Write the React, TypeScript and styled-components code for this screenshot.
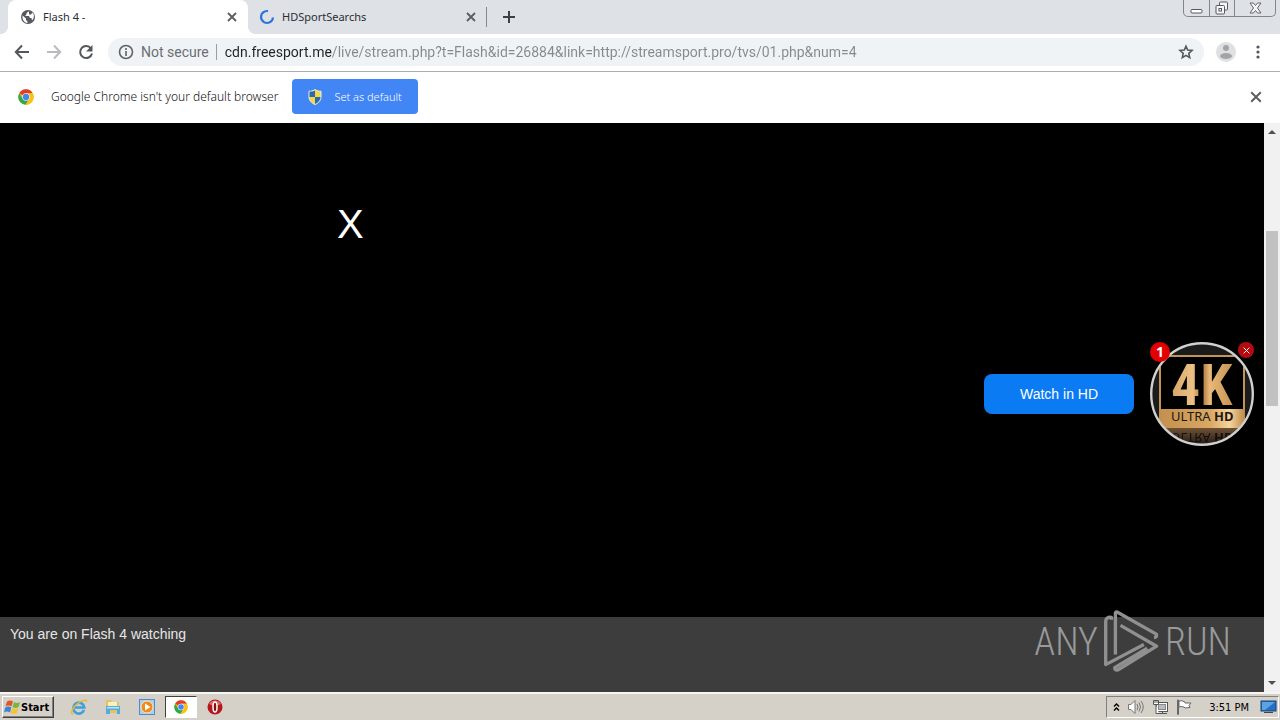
import React from "react";
import styled, { createGlobalStyle } from "styled-components";

const ui = '"Noto Sans", "Open Sans", sans-serif';
const address = 'Roboto, "Noto Sans", sans-serif';
const arial = '"Liberation Sans", Arial, sans-serif';

const GlobalStyle = createGlobalStyle`
  *, *::before, *::after { box-sizing: border-box; }
  body { margin: 0; background: #000; font-family: ${ui}; }
  button { font: inherit; border: 0; padding: 0; background: none; color: inherit; cursor: pointer; }
  svg { display: block; flex: none; }
`;

const Screen = styled.div`
  display: flex;
  flex-direction: column;
  min-height: 100vh;
`;

/* Browser frame */
const TabStrip = styled.div`
  display: flex;
  height: 34px;
  padding-left: 8px;
  background: #dee1e6;
`;

const Tab = styled.div<{ $active?: boolean }>`
  display: flex;
  align-items: center;
  position: relative;
  width: ${(p) => (p.$active ? 240 : 238)}px;
  padding: 0 ${(p) => (p.$active ? "10px 0 12px" : "9px 0 11px")};
  border-radius: 8px 8px 0 0;
  background: ${(p) => (p.$active ? "#fff" : "transparent")};
  ${(p) =>
    p.$active &&
    `
    &::before, &::after {
      content: "";
      position: absolute;
      bottom: 0;
      width: 8px;
      height: 8px;
    }
    &::before { left: -8px; background: radial-gradient(circle at 0 0, transparent 8px, #fff 8px); }
    &::after { right: -8px; background: radial-gradient(circle at 100% 0, transparent 8px, #fff 8px); }
  `}
`;

const TabTitle = styled.button`
  display: flex;
  flex: 1;
  align-items: center;
  gap: 7px;
  font-size: 11px;
  line-height: 16px;
  color: #2b2e33;
`;

const IconButton = styled.button<{ $size?: number }>`
  display: flex;
  flex: none;
  align-items: center;
  justify-content: center;
  width: ${(p) => p.$size ?? 16}px;
  height: ${(p) => p.$size ?? 16}px;
`;

const TabDivider = styled.span`
  align-self: center;
  width: 1px;
  height: 20px;
  margin-right: 14px;
  background: #85888d;
`;

const NewTab = styled(IconButton)`
  align-self: center;
`;

const WindowControls = styled.div`
  display: flex;
  height: 17px;
  margin: 0 4px 0 auto;
  border: 1px solid #81858c;
  border-top: 0;
  border-radius: 0 0 5px 5px;
`;

const WindowButton = styled.button<{ $wide?: boolean }>`
  display: flex;
  align-items: center;
  justify-content: center;
  width: ${(p) => (p.$wide ? 41 : 25)}px;
  & + & { border-left: 1px solid #81858c; }
`;

const Toolbar = styled.div`
  display: flex;
  align-items: center;
  height: 38px;
  padding: 0 12px 2px;
  border-bottom: 1px solid #adadad;
  background: #fff;
`;

const NavButtons = styled.div`
  display: flex;
  gap: 12px;
  margin-right: 12px;
`;

const AddressBar = styled.div`
  display: flex;
  flex: 1;
  align-items: center;
  height: 28px;
  margin-right: 12px;
  padding: 0 10px;
  border-radius: 14px;
  background: #f0f3f6;
`;

const Security = styled.label`
  padding: 0 7px;
  font: 14px/20px ${address};
  color: #6a6e73;
`;

const AddressDivider = styled.span`
  width: 1px;
  height: 16px;
  margin-right: 8px;
  background: #9a9da1;
`;

const AddressInput = styled.input`
  flex: 1;
  min-width: 0;
  height: 24px;
  padding: 0;
  border: 0;
  outline: 0;
  font: 14px/20px ${address};
  color: transparent;
  background: linear-gradient(90deg, #1f2226 0 107px, #85898d 107px);
  background-clip: text;
  -webkit-background-clip: text;
`;

const RightTools = styled.div`
  display: flex;
  align-items: center;
  gap: 12px;
`;

const InfoBar = styled.div`
  display: flex;
  align-items: center;
  height: 51px;
  padding: 0 16px 2px 18px;
  background: #fff;
`;

const InfoText = styled.p`
  margin: 0 14px 0 17px;
  font-size: 12px;
  font-weight: 300;
  line-height: 18px;
  color: #101214;
`;

const DefaultButton = styled.button`
  display: flex;
  align-items: center;
  gap: 12px;
  height: 35px;
  margin-right: auto;
  padding: 0 16px;
  border-radius: 4px;
  background: #4285f4;
  font-size: 11px;
  font-weight: 300;
  color: #fff;
`;

/* Page */
const PageArea = styled.div`
  display: flex;
  flex: 1;
  min-height: 520px;
`;

const Page = styled.main`
  display: flex;
  flex: 1;
  flex-direction: column;
  position: relative;
  background: #000;
  font-family: ${arial};
`;

const Player = styled.section`
  flex: 1;
  padding: 78px 0 0 337px;
`;

const CloseOverlay = styled.button`
  font-size: 40px;
  line-height: 46px;
  color: #fff;
`;

const PageFooter = styled.footer`
  height: 75px;
  padding: 8px 10px;
  background: #3d3d3d;
  font-size: 14px;
  line-height: 18px;
  color: #e6e6e6;
`;

const Promo = styled.div`
  display: flex;
  position: absolute;
  top: 219px;
  right: 10px;
  align-items: center;
  gap: 16px;
`;

const WatchButton = styled.button`
  width: 150px;
  height: 40px;
  border-radius: 8px;
  background: #0b7bf4;
  font-size: 14px;
  color: #fff;
`;

const Avatar = styled.div`
  position: relative;
`;

const Count = styled.span`
  display: flex;
  position: absolute;
  top: 0;
  left: 0;
  align-items: center;
  justify-content: center;
  width: 20px;
  height: 20px;
  border-radius: 50%;
  background: #e40000;
  font: bold 14px/20px "Noto Sans", sans-serif;
  color: #fff;
`;

const Dismiss = styled(IconButton)`
  position: absolute;
  top: 0;
  right: 0;
  border-radius: 50%;
  background: #b50a10;
`;

const Watermark = styled.div`
  display: flex;
  position: absolute;
  right: 33px;
  bottom: 19px;
  align-items: center;
  gap: 5px;
  font: 300 38px/62px "Roboto Condensed", Roboto, sans-serif;
  color: #999;
`;

const Scrollbar = styled.div`
  display: flex;
  flex-direction: column;
  align-items: center;
  width: 16px;
  background: #f1f1f1;
`;

const ScrollSpace = styled.span<{ $grow: number }>`
  flex: ${(p) => p.$grow} 1 0;
`;

const ScrollThumb = styled(ScrollSpace)`
  width: 12px;
  background: #c1c1c1;
`;

/* Taskbar */
const Taskbar = styled.footer`
  display: flex;
  align-items: center;
  height: 28px;
  padding: 0 1px 0 2px;
  border-top: 2px solid #f7f5f1;
  background: #d5d0c8;
  font-family: "DejaVu Sans Condensed", "DejaVu Sans", sans-serif;
`;

const StartButton = styled.button`
  display: flex;
  align-items: center;
  width: 52px;
  height: 22px;
  margin-right: 14px;
  padding-left: 1px;
  border: 1px solid;
  border-color: #fff #404040 #404040 #fff;
  box-shadow: inset -1px -1px #808080;
  font-size: 11px;
  font-weight: bold;
  color: #000;
`;

const QuickLaunch = styled.div`
  display: flex;
`;

const TaskButton = styled.button<{ $pressed?: boolean }>`
  display: flex;
  align-items: center;
  justify-content: center;
  width: ${(p) => (p.$pressed ? 32 : 22)}px;
  height: 22px;
  margin-right: ${(p) => (p.$pressed ? 7 : 12)}px;
  border: ${(p) => (p.$pressed ? "1px solid" : "0")};
  border-color: #404040 #fff #fff #404040;
  background: ${(p) => (p.$pressed ? "#fff" : "none")};
  &:nth-child(3) { margin-right: 7px; }
`;

const Tray = styled.div`
  display: flex;
  align-items: center;
  height: 22px;
  margin-left: auto;
  padding: 0 1px 0 5px;
  border: 1px solid;
  border-color: #808080 #fff #fff #808080;
`;

const TrayIcons = styled.div`
  display: flex;
  align-items: center;
  gap: 7px;
`;

const Clock = styled.time`
  margin: 0 11px 0 16px;
  font-size: 11px;
  color: #000;
`;

const Cross = ({ size = 10, color = "#5a5d61", width = 1.8 }) => (
  <svg width={size} height={size} viewBox="0 0 10 10" fill="none" stroke={color} strokeWidth={width}>
    <path d="M1 1l8 8M9 1l-8 8" />
  </svg>
);

const ChromeLogo = ({ size = 16 }) => (
  <svg width={size} height={size} viewBox="0 0 48 48">
    <circle cx="24" cy="24" r="23" fill="#fbc116" />
    <path d="M24 24L4 12.500A23 23 0 0 1 44 12.500H24z" fill="#e33b2e" />
    <path d="M4 12.500A23 23 0 0 0 23 47L33.500 29.500L24 24L14 29.500z" fill="#2da94f" />
    <path d="M24 13h20.200A23 23 0 0 1 23 47l10.500-17.500z" fill="#fbc116" />
    <circle cx="24" cy="24" r="11" fill="#fff" />
    <circle cx="24" cy="24" r="9.500" fill="#4285f4" />
  </svg>
);

const Globe = () => (
  <svg width="16" height="16" viewBox="0 0 16 16">
    <circle cx="8" cy="8" r="7" fill="#55585c" />
    <path d="M2.500 6.500L6 9.500v1.500l1.500 1.500v1.500C4 13.500 2 10.500 2.500 6.500zM9 2.300L6.500 4v1.500L5 7h4l1 2h1.500l.5 2.500c2.500-2.500 2.500-6 .5-8L11 5.500H9z" fill="#fff" />
  </svg>
);

const Spinner = () => (
  <svg width="16" height="16" viewBox="0 0 16 16" fill="none" stroke="#2e75db" strokeWidth="2.200">
    <path d="M4.800 2.900A6 6 0 1 0 14 8.500" />
    <path d="M4 3.600A6 6 0 0 1 9 2.100" />
  </svg>
);

const Shield = () => (
  <svg width="14" height="16" viewBox="0 0 14 16">
    <path d="M7 .5C5 2 3 2.300 1 2.200V8c0 3.500 2.500 6 6 7.500C10.500 14 13 11.500 13 8V2.200C11 2.300 9 2 7 .5z" fill="#f4d83d" stroke="#e8edf1" />
    <path d="M7 1.500V8H1.500V2.700C3.500 2.700 5.500 2.300 7 1.500zM7 8h5.500c0 3.200-2.200 5.400-5.500 7z" fill="#2a68b8" />
  </svg>
);

const Badge4K = () => (
  <svg width="104" height="104" viewBox="0 0 104 104" role="img" aria-label="4K Ultra HD">
    <defs>
      <linearGradient id="gold" x1="0" y1="0" x2="1" y2="0">
        <stop offset="0" stopColor="#d5a566" />
        <stop offset=".35" stopColor="#edc184" />
        <stop offset=".5" stopColor="#a5753d" />
        <stop offset=".62" stopColor="#e8b978" />
        <stop offset="1" stopColor="#c59152" />
      </linearGradient>
      <linearGradient id="band" x1="0" y1="0" x2="1" y2="0">
        <stop offset="0" stopColor="#c38f4e" />
        <stop offset=".6" stopColor="#d9a965" />
        <stop offset=".82" stopColor="#f5d49b" />
        <stop offset="1" stopColor="#bd884a" />
      </linearGradient>
      <linearGradient id="floor" x1="0" y1="0" x2="0" y2="1">
        <stop offset="0" stopColor="#705235" />
        <stop offset="1" stopColor="#1d1713" />
      </linearGradient>
      <clipPath id="disc"><circle cx="52" cy="52" r="50" /></clipPath>
    </defs>
    <g clipPath="url(#disc)">
      <rect width="104" height="104" fill="#1b1b1b" />
      <rect x="10" y="14" width="84" height="74" fill="#000" stroke="#c2935b" strokeWidth="2" />
      <text x="21" y="63" fontFamily="Roboto Condensed, Roboto, sans-serif" fontWeight="bold" fontSize="58" fill="url(#gold)">4K</text>
      <rect x="9" y="67" width="86" height="19" fill="url(#band)" />
      <text x="21" y="79" fontFamily="Noto Sans, sans-serif" fontSize="13" fill="#21180e">
        ULTRA <tspan fontWeight="bold">HD</tspan>
      </text>
      <rect y="86" width="104" height="18" fill="url(#floor)" />
      <g transform="matrix(1 0 0 -1 0 181)" opacity=".85">
        <text x="21" y="90" fontFamily="Noto Sans, sans-serif" fontSize="13" fill="#0b0908" aria-hidden="true">
          ULTRA <tspan fontWeight="bold">HD</tspan>
        </text>
      </g>
    </g>
    <circle cx="52" cy="52" r="50.800" fill="none" stroke="#d0d0d0" strokeWidth="2.400" />
  </svg>
);

const PlayMark = () => (
  <svg width="57" height="63" viewBox="268 28 170 188" fill="none" stroke="#909090" strokeWidth="10" strokeLinejoin="round">
    <path d="M293 57V50Q276 48 276 62V191L390 131" />
    <path d="M305 161V36Q308 32 314 36L427 100Q430 109 420 110" />
    <path d="M320 74L428 136L312 207Q303 209 303 200L400 142" />
  </svg>
);

export default function App() {
  return (
    <Screen>
      <GlobalStyle />
      <TabStrip>
        <Tab $active>
          <TabTitle><Globe />Flash 4 -</TabTitle>
          <IconButton $size={12} aria-label="Close tab"><Cross /></IconButton>
        </Tab>
        <Tab>
          <TabTitle><Spinner />HDSportSearchs</TabTitle>
          <IconButton $size={12} aria-label="Close tab"><Cross /></IconButton>
        </Tab>
        <TabDivider />
        <NewTab aria-label="New tab">
          <svg width="14" height="14" viewBox="0 0 14 14" stroke="#3c4043" strokeWidth="2"><path d="M7 1v12M1 7h12" /></svg>
        </NewTab>
        <WindowControls>
          <WindowButton aria-label="Minimize">
            <svg width="13" height="14" viewBox="0 0 13 14" fill="#fff" stroke="#555960"><rect x="1" y="8.500" width="11" height="3.500" rx="1" /></svg>
          </WindowButton>
          <WindowButton aria-label="Restore">
            <svg width="14" height="14" viewBox="0 0 14 14" fill="#f4f5f7" stroke="#555960">
              <rect x="4.500" y="1" width="8" height="8" rx="1" />
              <rect x="1" y="4.500" width="8.500" height="8.500" rx="1" />
              <rect x="4" y="7.500" width="2.500" height="2.500" />
            </svg>
          </WindowButton>
          <WindowButton $wide aria-label="Close">
            <svg width="13" height="12" viewBox="0 0 13 12" fill="#f4f5f7" stroke="#62666c">
              <path d="M1 1h3.500l2 2.500L8.500 1H12L8.500 6l3.500 5H8.500L6.500 8.500l-2 2.500H1l3.500-5z" />
            </svg>
          </WindowButton>
        </WindowControls>
      </TabStrip>

      <Toolbar>
        <NavButtons>
          <IconButton $size={20} aria-label="Back">
            <svg width="16" height="16" viewBox="0 0 16 16" fill="none" stroke="#54575b" strokeWidth="2"><path d="M15 8H2M8 1.500L1.800 8 8 14.500" /></svg>
          </IconButton>
          <IconButton $size={20} aria-label="Forward">
            <svg width="16" height="16" viewBox="0 0 16 16" fill="none" stroke="#b9bbbe" strokeWidth="2"><path d="M1 8h13M8 1.500L14.200 8 8 14.500" /></svg>
          </IconButton>
          <IconButton $size={20} aria-label="Reload">
            <svg width="16" height="16" viewBox="0 0 16 16" fill="none" stroke="#54575b" strokeWidth="2">
              <path d="M13 4.500A6 6 0 1 0 14 9.500" />
              <path d="M14.500 1v6.500H8z" fill="#54575b" stroke="none" />
            </svg>
          </IconButton>
        </NavButtons>
        <AddressBar>
          <svg width="16" height="16" viewBox="0 0 16 16" fill="none" stroke="#5f6368" strokeWidth="1.600">
            <circle cx="8" cy="8" r="6.500" /><path d="M8 7v5M8 4v2" />
          </svg>
          <Security htmlFor="address">Not secure</Security>
          <AddressDivider />
          <AddressInput
            id="address"
            spellCheck={false}
            defaultValue="cdn.freesport.me/live/stream.php?t=Flash&id=26884&link=http://streamsport.pro/tvs/01.php&num=4"
          />
          <IconButton aria-label="Bookmark">
            <svg width="16" height="16" viewBox="0 0 16 16" fill="none" stroke="#54575b" strokeWidth="1.600">
              <path d="M8 2.200l1.700 3.900 4.300.4-3.200 2.900.9 4.200L8 11.400l-3.700 2.200.9-4.200L2 6.500l4.300-.4z" />
            </svg>
          </IconButton>
        </AddressBar>
        <RightTools>
          <IconButton $size={20} aria-label="Profile">
            <svg width="20" height="20" viewBox="0 0 20 20">
              <circle cx="10" cy="10" r="10" fill="#dfe0e1" />
              <circle cx="10" cy="6" r="3" fill="#a2a4a6" /><ellipse cx="10" cy="14" rx="6" ry="3" fill="#a2a4a6" />
            </svg>
          </IconButton>
          <IconButton $size={20} aria-label="Menu">
            <svg width="4" height="14" viewBox="0 0 4 14" fill="#54575b"><circle cx="2" cy="2" r="1.600" /><circle cx="2" cy="7" r="1.600" /><circle cx="2" cy="12" r="1.600" /></svg>
          </IconButton>
        </RightTools>
      </Toolbar>

      <InfoBar>
        <ChromeLogo />
        <InfoText>Google Chrome isn't your default browser</InfoText>
        <DefaultButton><Shield />Set as default</DefaultButton>
        <IconButton aria-label="Dismiss"><Cross size={12} width={1.6} /></IconButton>
      </InfoBar>

      <PageArea>
        <Page>
          <Player><CloseOverlay>X</CloseOverlay></Player>
          <PageFooter>You are on Flash 4 watching</PageFooter>
          <Promo>
            <WatchButton>Watch in HD</WatchButton>
            <Avatar>
              <Badge4K />
              <Count>1</Count>
              <Dismiss aria-label="Close offer"><Cross size={7} width={1.4} color="#fff" /></Dismiss>
            </Avatar>
          </Promo>
          <Watermark><span>ANY</span><PlayMark /><span>RUN</span></Watermark>
        </Page>
        <Scrollbar>
          <svg width="16" height="17" viewBox="0 0 16 17" fill="#505050"><path d="M4 11l4-4 4 4z" /></svg>
          <ScrollSpace $grow={91} />
          <ScrollThumb $grow={175} />
          <ScrollSpace $grow={269} />
          <svg width="16" height="17" viewBox="0 0 16 17" fill="#505050"><path d="M4 6l4 4 4-4z" /></svg>
        </Scrollbar>
      </PageArea>

      <Taskbar>
        <StartButton>
          <svg width="17" height="16" viewBox="0 0 17 16">
            <path d="M3 2.500q3-2 6 0L7.500 7.500q-3-2-6 0z" fill="#e2562a" />
            <path d="M10 3q3 2 6 0l-1.500 5q-3 2-6 0z" fill="#7ab53c" />
            <path d="M1.300 8.500q3-2 6 0L6 13.500q-3-2-6 0z" fill="#3c83cf" />
            <path d="M8.300 9q3 2 6 0l-1.500 5q-3 2-6 0z" fill="#f6c22f" />
          </svg>
          Start
        </StartButton>
        <QuickLaunch>
          <TaskButton aria-label="Internet Explorer">
            <svg width="18" height="18" viewBox="0 0 18 18" fill="none">
              <path d="M14 12A5.500 5.500 0 1 1 14.300 9.500H5" stroke="#3da1dd" strokeWidth="2.600" />
              <path d="M3 16C0 16 2 10 7 6s10-5 9.500-2" stroke="#e9b92e" strokeWidth="1.500" />
            </svg>
          </TaskButton>
          <TaskButton aria-label="Explorer">
            <svg width="18" height="18" viewBox="0 0 18 18">
              <path d="M2 2h5l1 2h7v11H2z" fill="#e3c45c" />
              <path d="M4 4h9v5H4z" fill="#f9efc0" />
              <path d="M2 8h14v8h-3v-4H6v4H2z" fill="#55abd9" />
              <path d="M3 9h12v1.500H3z" fill="#c1e3f2" />
            </svg>
          </TaskButton>
          <TaskButton aria-label="Media Player">
            <svg width="16" height="16" viewBox="0 0 16 16">
              <rect x=".5" y=".5" width="15" height="15" fill="#a9d1ee" stroke="#4a8cc5" />
              <circle cx="8" cy="8" r="6" fill="#f28a1c" stroke="#fbe3c4" /><path d="M6 4.500v7L11.500 8z" fill="#fff" />
            </svg>
          </TaskButton>
          <TaskButton $pressed aria-label="Google Chrome"><ChromeLogo size={14} /></TaskButton>
          <TaskButton aria-label="Opera">
            <svg width="16" height="16" viewBox="0 0 16 16">
              <circle cx="8" cy="8" r="7.500" fill="#b3161b" /><path d="M2 5a7 7 0 0 1 12 0q-6 3-12 0z" fill="#df6a67" />
              <ellipse cx="8" cy="8" rx="2" ry="5" fill="#8b0c10" stroke="#fff" strokeWidth="1.500" />
            </svg>
          </TaskButton>
        </QuickLaunch>
        <Tray>
          <TrayIcons>
            <IconButton $size={8} aria-label="Show hidden icons">
              <svg width="7" height="10" viewBox="0 0 7 10" fill="none" stroke="#000" strokeWidth="1.400"><path d="M1 4.500L3.500 2 6 4.500M1 8.500L3.500 6 6 8.500" /></svg>
            </IconButton>
            <IconButton $size={18} aria-label="Volume">
              <svg width="18" height="16" viewBox="0 0 18 16" fill="none" stroke="#77777a">
                <path d="M1.500 5.500H4l4-4v13l-4-4H1.500z" fill="#fff" /><path d="M10 5q2 3 0 6M12 3.500q3 4.500 0 9M14 2q4.500 6 0 12" />
              </svg>
            </IconButton>
            <IconButton $size={17} aria-label="Network">
              <svg width="17" height="16" viewBox="0 0 17 16" fill="#fff" stroke="#55585b">
                <rect x="4.500" y="3.500" width="11" height="9" /><rect x="6.500" y="5.500" width="7" height="5" fill="#bbb" stroke="#888" />
                <path d="M7 14.500h8M10.500 13v1M1.500 1.500h5v4h-5zM3 1v3M5 1v3M4 6v8.500h3" />
              </svg>
            </IconButton>
            <IconButton $size={17} aria-label="Action center">
              <svg width="17" height="16" viewBox="0 0 17 16" fill="#fff" stroke="#66696c">
                <path d="M1.500 1v14.500h1V1z" /><path d="M3 2q3-1 6 1v1h6l-2 2.500 1 2-5 .5-1-1q-3-1-5 0z" />
              </svg>
            </IconButton>
          </TrayIcons>
          <Clock>3:51 PM</Clock>
          <IconButton $size={17} aria-label="Show desktop">
            <svg width="17" height="14" viewBox="0 0 17 14">
              <rect x="1" y="1" width="15" height="10" fill="#2670c4" stroke="#1b4379" /><path d="M2 2h13L5 10H2z" fill="#5ba4e2" /><path d="M4 12.500h9" stroke="#444" />
            </svg>
          </IconButton>
        </Tray>
      </Taskbar>
    </Screen>
  );
}
